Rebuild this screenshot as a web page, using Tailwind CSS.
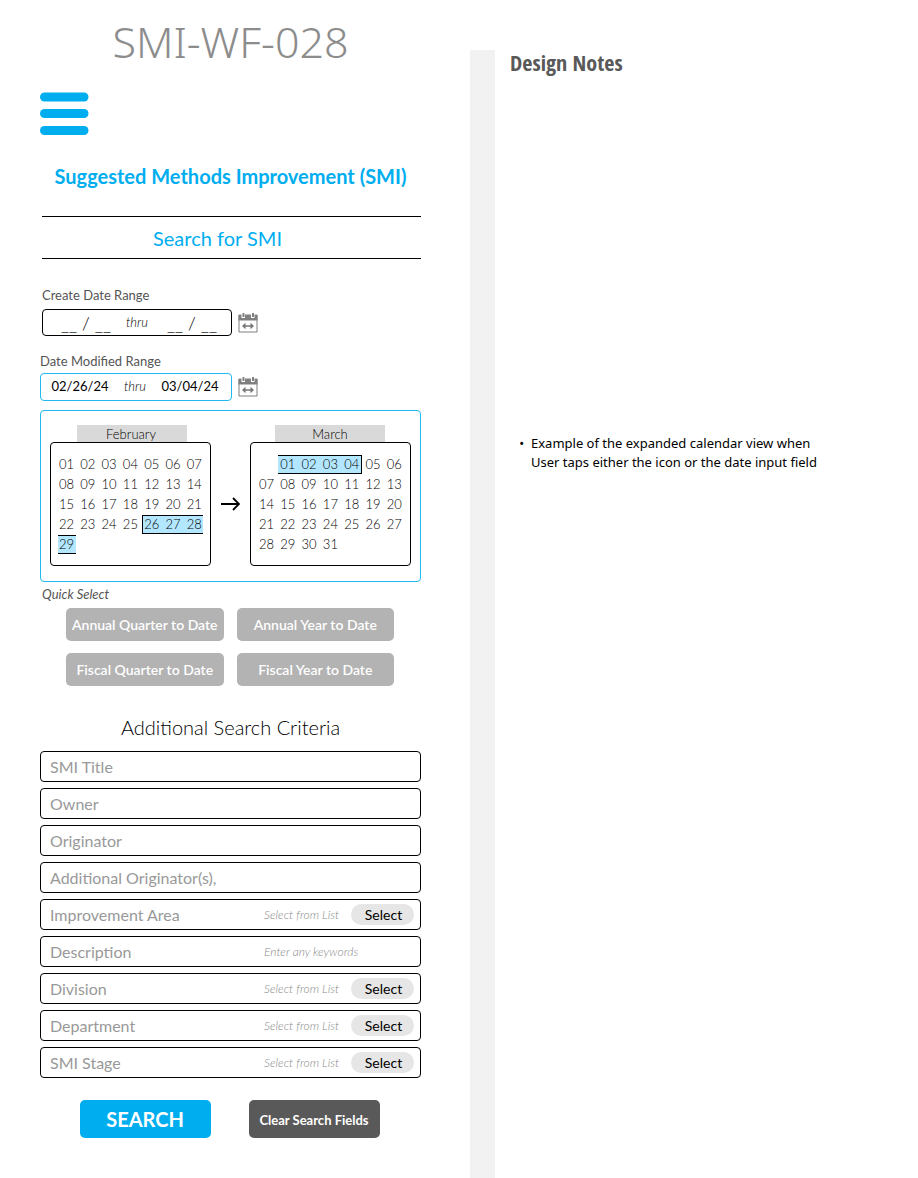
<!DOCTYPE html>
<html lang="en">
<head>
<meta charset="utf-8">
<meta name="viewport" content="width=device-width, initial-scale=1">
<title>SMI-WF-028</title>
<script src="https://cdn.jsdelivr.net/npm/@tailwindcss/browser@4"></script>
</head>
<body class="bg-white font-['Lato',sans-serif] text-[#555]">
<div class="grid min-h-screen grid-cols-[470fr_25px_423fr]">

  <main class="flex flex-col pt-[19px] pr-[49px] pb-10 pl-10">
    <h1 class="text-center font-['Noto_Sans',sans-serif] text-[43px] leading-[46px] font-light text-[#8c8c8c]">SMI-WF-028</h1>

    <button type="button" aria-label="Menu" class="mt-[27px] self-start">
      <svg class="block h-[43px] w-[49px]" viewBox="0 0 49 43" fill="#00aeef" aria-hidden="true">
        <rect x="0" y="0.5" width="48.500" height="9" rx="4.500"/>
        <rect x="0" y="17" width="48.500" height="9" rx="4.500"/>
        <rect x="0" y="34" width="48.500" height="9" rx="4.500"/>
      </svg>
    </button>

    <h2 class="mt-[29px] text-center text-xl leading-6 font-bold text-[#00aeef]">Suggested Methods Improvement (SMI)</h2>

    <h3 class="mt-7 ml-0.5 border-y border-black pt-[9px] pr-7 pb-2 text-center text-xl leading-6 text-[#00aeef]">Search for SMI</h3>

    <form class="flex flex-col">
      <fieldset class="mt-7">
        <legend class="ml-0.5 text-[13px] leading-4">Create Date Range</legend>
        <div class="mt-1.5 ml-0.5 flex items-center gap-1.5">
          <div class="flex h-[27px] w-[190px] items-center justify-between rounded border border-black pr-3 pl-4">
            <input type="text" aria-label="Created from" value="__ / __" class="w-[54px] text-center text-lg font-light text-black outline-none">
            <span class="pr-1 text-[13px] font-light text-black italic">thru</span>
            <input type="text" aria-label="Created to" value="__ / __" class="w-[54px] text-center text-lg font-light text-black outline-none">
          </div>
          <button type="button" aria-label="Open create date calendar">
            <svg class="block size-5" viewBox="0 0 20 20" aria-hidden="true"><path d="M1 2H19V19H1Z" fill="#fff" stroke="#808080"/><path d="M.5 2H19.500V7.500H.5Z" fill="#808080"/><path d="M3.500 0H7V5H3.500ZM13 0H16.500V5H13Z" fill="#fff"/><path d="M4.500 0H6.500V4H4.500ZM14 0H16V4H14Z" fill="#808080"/><path d="M4 13 7.500 9.700V12.200H12.500V9.700L16 13 12.500 16.300V13.800H7.500V16.300Z" fill="#777"/></svg>
          </button>
        </div>
      </fieldset>

      <fieldset class="mt-[17px]">
        <legend class="text-[13px] leading-4">Date Modified Range</legend>
        <div class="mt-1 flex items-center gap-1.5">
          <div class="flex h-7 w-48 items-center justify-between rounded border border-[#22b8f1] pr-3 pl-2.5">
            <input type="text" aria-label="Modified from" value="02/26/24" class="w-[58px] text-center text-[13px] text-black outline-none">
            <span class="text-[13px] font-light text-black italic">thru</span>
            <input type="text" aria-label="Modified to" value="03/04/24" class="w-[58px] text-center text-[13px] text-black outline-none">
          </div>
          <button type="button" aria-label="Open date modified calendar">
            <svg class="block size-5" viewBox="0 0 20 20" aria-hidden="true"><path d="M1 2H19V19H1Z" fill="#fff" stroke="#808080"/><path d="M.5 2H19.500V7.500H.5Z" fill="#808080"/><path d="M3.500 0H7V5H3.500ZM13 0H16.500V5H13Z" fill="#fff"/><path d="M4.500 0H6.500V4H4.500ZM14 0H16V4H14Z" fill="#808080"/><path d="M4 13 7.500 9.700V12.200H12.500V9.700L16 13 12.500 16.300V13.800H7.500V16.300Z" fill="#777"/></svg>
          </button>
        </div>
      </fieldset>

      <div class="mt-[9px] flex items-center gap-2.5 rounded border border-[#22b8f1] px-[9px] pt-3.5 pb-[15px]">
        <section aria-label="February" class="flex flex-1 flex-col">
          <h4 class="ml-[27px] h-[17px] w-[110px] bg-[#d9d9d9] pr-0.5 text-center text-[13px] leading-[19px] font-light text-black">February</h4>
          <div class="rounded border border-black pt-3 pr-1 pb-2.5 pl-1.5">
            <table class="w-full table-fixed border-separate border-spacing-0 text-[13px] leading-[19px] font-light text-black">
              <tbody id="february"></tbody>
            </table>
          </div>
        </section>
        <svg class="mt-4 block h-4 w-[19px] shrink-0" viewBox="0 0 19 16" fill="none" stroke="#000" stroke-width="1.800" aria-hidden="true"><path d="M0 8H18M12 2 18 8 12 14"/></svg>
        <section aria-label="March" class="flex flex-1 flex-col">
          <h4 class="ml-[25px] h-[17px] w-[110px] bg-[#d9d9d9] text-center text-[13px] leading-[19px] font-light text-black">March</h4>
          <div class="rounded border border-black pt-3 pr-1 pb-2.5 pl-1.5">
            <table class="w-full table-fixed border-separate border-spacing-0 text-[13px] leading-[19px] font-light text-black">
              <tbody id="march"></tbody>
            </table>
          </div>
        </section>
      </div>

      <p class="mt-1 ml-0.5 text-[13px] leading-4 italic">Quick Select</p>
      <div class="mt-1.5 mr-[27px] ml-[26px] grid grid-cols-2 gap-x-[13px] gap-y-3 text-sm font-semibold text-white">
        <button type="button" class="h-[33px] rounded-[5px] bg-[#b3b3b3] whitespace-nowrap">Annual Quarter to Date</button>
        <button type="button" class="h-[33px] rounded-[5px] bg-[#b3b3b3] whitespace-nowrap">Annual Year to Date</button>
        <button type="button" class="h-[33px] rounded-[5px] bg-[#b3b3b3] whitespace-nowrap">Fiscal Quarter to Date</button>
        <button type="button" class="h-[33px] rounded-[5px] bg-[#b3b3b3] whitespace-nowrap">Fiscal Year to Date</button>
      </div>

      <h3 class="mt-[29px] text-center text-xl leading-6 font-light text-black">Additional Search Criteria</h3>

      <div class="mt-3 flex flex-col gap-1.5 text-base text-[#999]">
        <input type="text" aria-label="SMI Title" placeholder="SMI Title" class="h-[31px] rounded border border-black px-[9px] placeholder:text-[#999]">
        <input type="text" aria-label="Owner" placeholder="Owner" class="h-[31px] rounded border border-black px-[9px] placeholder:text-[#999]">
        <input type="text" aria-label="Originator" placeholder="Originator" class="h-[31px] rounded border border-black px-[9px] placeholder:text-[#999]">
        <input type="text" aria-label="Additional Originators" placeholder="Additional Originator(s)," class="h-[31px] rounded border border-black px-[9px] placeholder:text-[#999]">
        <div class="flex h-[31px] items-center rounded border border-black pr-1.5 pl-[9px]">
          <label for="area" class="flex-1">Improvement Area</label>
          <input id="area" type="text" placeholder="Select from List" class="w-[87px] text-xs font-light italic outline-none placeholder:text-[#888]">
          <button type="button" class="h-[21px] w-[63px] rounded-full bg-[#e6e6e6] pl-0.5 text-sm text-black">Select</button>
        </div>
        <div class="flex h-[31px] items-center rounded border border-black pr-1.5 pl-[9px]">
          <label for="description" class="flex-1">Description</label>
          <input id="description" type="text" placeholder="Enter any keywords" class="w-[150px] text-xs font-light italic outline-none placeholder:text-[#888]">
        </div>
        <div class="flex h-[31px] items-center rounded border border-black pr-1.5 pl-[9px]">
          <label for="division" class="flex-1">Division</label>
          <input id="division" type="text" placeholder="Select from List" class="w-[87px] text-xs font-light italic outline-none placeholder:text-[#888]">
          <button type="button" class="h-[21px] w-[63px] rounded-full bg-[#e6e6e6] pl-0.5 text-sm text-black">Select</button>
        </div>
        <div class="flex h-[31px] items-center rounded border border-black pr-1.5 pl-[9px]">
          <label for="department" class="flex-1">Department</label>
          <input id="department" type="text" placeholder="Select from List" class="w-[87px] text-xs font-light italic outline-none placeholder:text-[#888]">
          <button type="button" class="h-[21px] w-[63px] rounded-full bg-[#e6e6e6] pl-0.5 text-sm text-black">Select</button>
        </div>
        <div class="flex h-[31px] items-center rounded border border-black pr-1.5 pl-[9px]">
          <label for="stage" class="flex-1">SMI Stage</label>
          <input id="stage" type="text" placeholder="Select from List" class="w-[87px] text-xs font-light italic outline-none placeholder:text-[#888]">
          <button type="button" class="h-[21px] w-[63px] rounded-full bg-[#e6e6e6] pl-0.5 text-sm text-black">Select</button>
        </div>
      </div>

      <div class="mt-[22px] flex items-center justify-center gap-[38px] pr-0.5">
        <button type="submit" class="h-[38px] w-[131px] rounded-[5px] bg-[#00aeef] text-xl font-bold text-white">SEARCH</button>
        <button type="reset" class="h-[38px] w-[131px] rounded-[5px] bg-[#595959] pt-1 text-[13px] font-bold text-white">Clear Search Fields</button>
      </div>
    </form>
  </main>

  <div class="mt-[50px] bg-[#f2f2f2]"></div>

  <aside class="pt-12 pr-8 pl-[15px]">
    <h2 class="font-['Noto_Sans_Condensed','Open_Sans_Condensed','Noto_Sans',sans-serif] text-[22px] leading-7 font-bold text-[#595959]">Design Notes</h2>
    <ul class="mt-[358px] list-['•__'] pl-[21px] font-['Noto_Sans',sans-serif] text-[13px] leading-[19px] text-black">
      <li>Example of the expanded calendar view when<br>User taps either the icon or the date input field</li>
    </ul>
  </aside>
</div>

<script>
  // Fills one month; `lead` is the number of blank cells before day 1.
  function fillMonth(id, days, lead, styles) {
    const body = document.getElementById(id);
    for (let cell = 0; cell < 35; cell++) {
      if (cell % 7 === 0) body.insertRow();
      const td = body.rows[body.rows.length - 1].insertCell();
      td.className = "h-5 p-0 align-top";
      const day = cell - lead + 1;
      if (day < 1 || day > days) continue;
      const box = document.createElement("div");
      box.className = styles[day] || "h-[19px] pl-0.5";
      box.textContent = String(day).padStart(2, "0");
      td.append(box);
    }
  }
  const middle = "h-[19px] pl-0.5 bg-[#b3e7ff] border-y border-black leading-[17px]";
  fillMonth("february", 29, 0, {
    26: "h-[19px] pl-px bg-[#b3e7ff] border-y border-l border-black leading-[17px]",
    27: middle,
    28: "h-[19px] w-[18px] pl-0.5 bg-[#b3e7ff] border-y border-black leading-[17px]",
    29: "h-[19px] w-[18px] ml-px pl-px bg-[#b3e7ff] border-y border-black leading-[17px]"
  });
  fillMonth("march", 31, 1, {
    1: middle, 2: middle, 3: middle,
    4: "h-[19px] w-5 pl-0.5 bg-[#b3e7ff] border-y border-r border-black leading-[17px]"
  });
</script>
</body>
</html>
